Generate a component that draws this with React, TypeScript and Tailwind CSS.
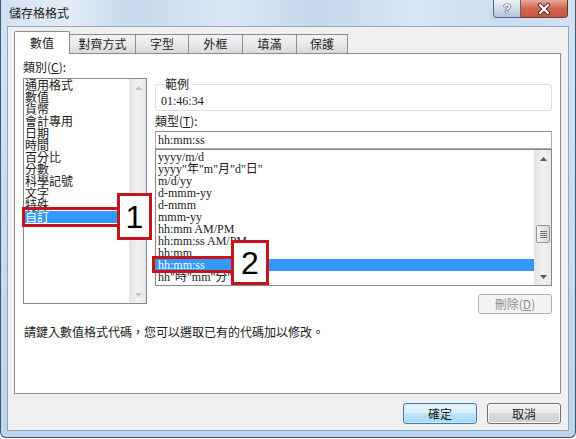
import React from 'react';

const categories = ['通用格式', '數值', '貨幣', '會計專用', '日期', '時間', '百分比', '分數', '科學記號', '文字', '特殊', '自訂'];
const types = ['yyyy/m/d', 'yyyy"年"m"月"d"日"', 'm/d/yy', 'd-mmm-yy', 'd-mmm', 'mmm-yy', 'hh:mm AM/PM', 'hh:mm:ss AM/PM', 'hh:mm', 'hh:mm:ss', 'hh"時"mm"分"'];

function Arrow({ up, disabled }: { up?: boolean; disabled?: boolean }) {
  return (
    <svg width="7" height="4" viewBox="0 0 7 4">
      <path d={up ? 'M0 4 L3.5 0 L7 4 Z' : 'M0 0 L3.5 4 L7 0 Z'} fill={disabled ? '#c2c2c2' : '#4f5a6b'} />
    </svg>
  );
}

// Win7 style vertical scrollbar
function ScrollBar({ disabled, withThumb }: { disabled?: boolean; withThumb?: boolean }) {
  return (
    <div className="w-[17px] h-full flex flex-col bg-linear-to-r from-[#e5e5e5] via-[#f1f1f1] to-[#e8e8e8] border-l border-[#e6e6e6]">
      <div className="h-[17px] flex items-center justify-center">
        <Arrow up disabled={disabled} />
      </div>
      <div className="flex-1 flex flex-col items-center">
        {withThumb && (
          <div className="mt-[58px] w-[14px] h-[18px] rounded-[2px] border border-[#959595] bg-linear-to-r from-[#f4f4f4] to-[#d6d6d6] flex flex-col items-center justify-center gap-[1px]">
            <div className="w-[7px] h-px bg-[#6f6f6f]" />
            <div className="w-[7px] h-px bg-[#6f6f6f]" />
            <div className="w-[7px] h-px bg-[#6f6f6f]" />
            <div className="w-[7px] h-px bg-[#6f6f6f]" />
          </div>
        )}
      </div>
      <div className="h-[17px] flex items-center justify-center">
        <Arrow disabled={disabled} />
      </div>
    </div>
  );
}

function Tab({ label, width }: { label: string; width: string }) {
  return (
    <div className={`${width} h-[19px] border-t border-r border-[#898c95] bg-linear-to-b from-[#f3f3f3] via-[#e9e9e9] to-[#d9d9d9] flex items-center justify-center text-[12px] leading-[12px] text-[#1e1e1e]`}>
      {label}
    </div>
  );
}

export default function App() {
  return (
    <div className="w-[576px] h-[439px] bg-white font-['Noto_Sans_CJK_TC',sans-serif] text-[#1a1a1a]">
      <div className="relative w-[576px] h-[438px] flex flex-col border-x border-b border-[#46566a] rounded-b-[6px] bg-linear-to-b from-[#d3e3f4] to-[#bed5ee] overflow-hidden">
        {/* Title bar */}
        <div className="h-[26px] flex items-start bg-[linear-gradient(90deg,#d2e1f2_0%,#e4edf7_12%,#c7d9ec_22%,#dbe7f4_40%,#c5d7eb_55%,#d9e6f4_72%,#cadcef_88%,#d3e2f3_100%)]">
          <div className="pl-[8px] pt-[6px] text-[12px] leading-[14px] text-[#1b1b1b]">儲存格格式</div>
          <div className="ml-auto mr-[7px] flex">
            <div className="w-[28px] h-[18px] rounded-bl-[4px] border border-t-0 border-[#55677f] bg-linear-to-b from-[#eef2f7] to-[#b3c3d6] flex items-center justify-center">
              <span className="font-['Liberation_Sans',sans-serif] font-bold text-[13px] leading-[13px] text-white [text-shadow:0_0_1px_#2b3a4c,0_0_1px_#2b3a4c,0_0_1px_#2b3a4c]">?</span>
            </div>
            <div className="w-[47px] h-[18px] rounded-br-[4px] border border-t-0 border-l-0 border-[#6b3a34] bg-linear-to-b from-[#e9a899] via-[#d06550] to-[#c9553f] flex items-center justify-center">
              <svg width="14" height="12" viewBox="0 0 14 12">
                <path d="M3 2 L11 10 M11 2 L3 10" stroke="#4a2a25" strokeWidth="4" strokeLinecap="round" />
                <path d="M3 2 L11 10 M11 2 L3 10" stroke="#ffffff" strokeWidth="2.2" strokeLinecap="round" />
              </svg>
            </div>
          </div>
        </div>

        {/* Client area */}
        <div className="mx-[6px] h-[405px] border border-[#8fa6bf] bg-[#f0f0f0] flex flex-col">
          {/* Tabs */}
          <div className="h-[26px] pl-[6px] flex items-end">
            <div className="relative z-10 -mb-px w-[56px] h-[23px] bg-white border border-b-0 border-[#898c95] rounded-t-[2px] flex items-center justify-center text-[12px] leading-[12px]">
              數值
            </div>
            <Tab label="對齊方式" width="w-[66px]" />
            <Tab label="字型" width="w-[53px]" />
            <Tab label="外框" width="w-[54px]" />
            <Tab label="填滿" width="w-[54px]" />
            <Tab label="保護" width="w-[51px]" />
          </div>

          {/* Tab panel */}
          <div className="ml-[6px] w-[547px] h-[341px] border border-[#898c95] bg-white pl-[8px] pt-[7px] flex flex-col">
            <div className="flex gap-[8px]">
              {/* Category column */}
              <div className="w-[124px] flex flex-col">
                <div className="text-[12px] leading-[12px]">
                  類別(<span className="underline">C</span>):
                </div>
                <div className="mt-[5px] h-[226px] border border-[#828790] flex">
                  <div className="flex-1 flex flex-col">
                    {categories.map((c, i) => (
                      <div
                        key={c}
                        className={`h-[12px] pl-[1px] text-[12px] leading-[12px] ${i === categories.length - 1 ? 'bg-[#3399ff] text-white' : ''}`}
                      >
                        {c}
                      </div>
                    ))}
                  </div>
                  <ScrollBar disabled />
                </div>
              </div>

              {/* Type column */}
              <div className="w-[397px] flex flex-col">
                <fieldset className="mt-[17px] border border-[#d5dfe5] rounded-[3px] pl-[5px] pt-[5px] pb-[3px]">
                  <legend className="ml-[3px] px-[1px] text-[12px] leading-[12px]">範例</legend>
                  <div className="font-['Liberation_Serif',serif] text-[12px] leading-[12px]">01:46:34</div>
                </fieldset>
                <div className="mt-[4px] text-[12px] leading-[12px]">
                  類型(<span className="underline">T</span>):
                </div>
                <div className="mt-[4px] h-[18px] border border-[#abadb3] border-t-[#8e9198] flex items-center pl-[2px] font-['Liberation_Serif',serif] text-[12px] leading-[12px]">
                  hh:mm:ss
                </div>
                <div className="h-[137px] border border-[#828790] flex">
                  <div className="flex-1 pt-[1px] flex flex-col overflow-hidden">
                    {types.map((t, i) => (
                      <div
                        key={t}
                        className={`h-[12px] shrink-0 pl-[2px] whitespace-nowrap font-['Liberation_Serif','Noto_Sans_CJK_TC',serif] text-[12px] leading-[12px] ${i === 9 ? 'bg-[#3399ff] text-white' : ''}`}
                      >
                        {t}
                      </div>
                    ))}
                  </div>
                  <ScrollBar withThumb />
                </div>
                <div className="mt-[8px] self-end w-[74px] h-[20px] rounded-[3px] border border-[#adb2b5] bg-[#f4f4f4] flex items-center justify-center text-[12px] leading-[12px] text-[#8d8d8d]">
                  刪除(<span className="underline">D</span>)
                </div>
              </div>
            </div>

            <div className="mt-[12px] ml-[1px] text-[12px] leading-[12px]">
              請鍵入數值格式代碼，您可以選取已有的代碼加以修改。
            </div>
          </div>

          {/* Dialog buttons */}
          <div className="mt-[9px] mr-[7px] flex justify-end gap-[10px]">
            <div className="w-[74px] h-[21px] rounded-[3px] border border-[#3c7fb1] bg-[linear-gradient(#eaf6fd_0%,#d9f0fc_50%,#bee6fd_50%,#a7d9f5_100%)] shadow-[inset_0_0_0_1px_#c9ebfb] flex items-center justify-center text-[12px] leading-[12px]">
              確定
            </div>
            <div className="w-[74px] h-[21px] rounded-[3px] border border-[#707070] bg-[linear-gradient(#f2f2f2_0%,#ebebeb_50%,#dddddd_50%,#cfcfcf_100%)] shadow-[inset_0_0_0_1px_#fbfbfb] flex items-center justify-center text-[12px] leading-[12px]">
              取消
            </div>
          </div>
        </div>

        {/* Annotation boxes */}
        <div className="absolute left-[21px] top-[207px] w-[99px] h-[20px] border-[3px] border-[#c4161c]" />
        <div className="absolute left-[116px] top-[193px] w-[35px] h-[47px] border-[3px] border-[#c4161c] bg-white flex items-center justify-center font-['Liberation_Sans',sans-serif] text-[32px] leading-[32px] text-black">
          1
        </div>
        <div className="absolute left-[151px] top-[256px] w-[83px] h-[17px] border-[3px] border-[#c4161c]" />
        <div className="absolute left-[230px] top-[240px] w-[38px] h-[45px] border-[3px] border-[#c4161c] bg-white flex items-center justify-center font-['Liberation_Sans',sans-serif] text-[32px] leading-[32px] text-black">
          2
        </div>
      </div>
    </div>
  );
}
